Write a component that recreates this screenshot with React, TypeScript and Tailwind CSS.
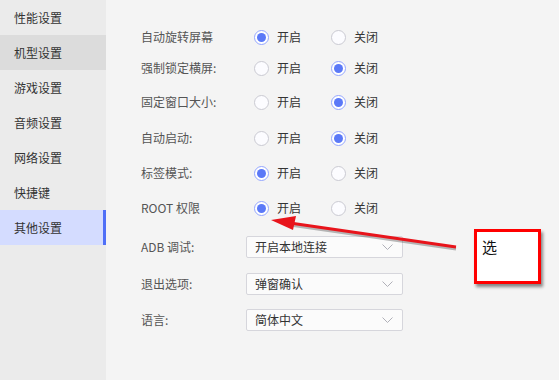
import React from "react";

const font = { fontFamily: '"Noto Sans CJK SC", "Noto Sans", sans-serif' };

const menu = ["性能设置", "机型设置", "游戏设置", "音频设置", "网络设置", "快捷键", "其他设置"];

const toggles = [
  { label: "自动旋转屏幕", on: true, mt: "mt-[27px]" },
  { label: "强制锁定横屏:", on: false, mt: "mt-[11px]" },
  { label: "固定窗口大小:", on: false, mt: "mt-[14px]" },
  { label: "自动启动:", on: false, mt: "mt-[16px]" },
  { label: "标签模式:", on: true, mt: "mt-[15px]" },
  { label: "ROOT 权限", on: true, mt: "mt-[15px]" },
];

const selects = [
  { label: "ADB 调试:", value: "开启本地连接", mt: "mt-[18px]" },
  { label: "退出选项:", value: "弹窗确认", mt: "mt-[15px]" },
  { label: "语言:", value: "简体中文", mt: "mt-[14px]" },
];

const Radio: React.FC<{ checked: boolean; text: string }> = ({ checked, text }) => (
  <div className="flex items-center w-[77px]">
    <span
      className={
        checked
          ? "flex items-center justify-center w-[15px] h-[15px] rounded-full border border-[#94a6ff] bg-white"
          : "flex items-center justify-center w-[15px] h-[15px] rounded-full border border-[#cacad2] bg-[#fcfcff]"
      }
    >
      {checked && <span className="w-[9px] h-[9px] rounded-full bg-[#5b79f7]" />}
    </span>
    <span className="ml-[8px] text-[12px] text-[#333]">{text}</span>
  </div>
);

export default function App() {
  return (
    <div className="relative flex w-full h-[380px] bg-[#f4f4f4] overflow-hidden" style={font}>
      {/* sidebar */}
      <aside className="w-[106px] h-full bg-[#ebebeb] flex flex-col">
        {menu.map((m, i) => (
          <div
            key={m}
            className={
              i === 6
                ? "h-[35px] flex items-center pl-[14px] text-[12px] text-[#333] bg-[#d4dcff] border-r-[3px] border-[#4f6ff7]"
                : i === 1
                ? "h-[35px] flex items-center pl-[14px] text-[12px] text-[#333] bg-[#dcdcdc]"
                : "h-[35px] flex items-center pl-[14px] text-[12px] text-[#333]"
            }
          >
            {m}
          </div>
        ))}
      </aside>

      {/* content */}
      <main className="flex-1 flex flex-col pl-[35px]">
        {toggles.map((t) => (
          <div key={t.label} className={`flex items-center h-[20px] ${t.mt}`}>
            <span className="w-[105px] text-[12px] text-[#555]">{t.label}</span>
            <div className="flex items-center ml-[8px]">
              <Radio checked={t.on} text="开启" />
              <Radio checked={!t.on} text="关闭" />
            </div>
          </div>
        ))}
        {selects.map((s) => (
          <div key={s.label} className={`flex items-center h-[22px] ${s.mt}`}>
            <span className="w-[105px] text-[12px] text-[#555]">{s.label}</span>
            <div className="flex items-center justify-between w-[157px] h-[22px] pl-[8px] pr-[9px] bg-[#fbfbfb] border border-[#d6d6dc] rounded-[2px]">
              <span className="text-[12px] text-[#333]">{s.value}</span>
              <svg width="11" height="6" viewBox="0 0 11 6">
                <path d="M0.5 0.5 L5.5 5.5 L10.5 0.5" fill="none" stroke="#b0b0b8" strokeWidth="1" />
              </svg>
            </div>
          </div>
        ))}
      </main>

      {/* annotation arrow */}
      <svg className="absolute left-0 top-0 pointer-events-none" width="559" height="380">
        <line x1="290" y1="225" x2="456" y2="249" stroke="rgba(60,60,60,0.35)" strokeWidth="3" />
        <line x1="290" y1="223" x2="456" y2="247" stroke="#e8141b" strokeWidth="3" />
        <polygon points="271,220 296,216 293,230" fill="#e8141b" />
      </svg>

      {/* annotation box */}
      <div className="absolute left-[474px] top-[229px] w-[67px] h-[55px] bg-white border-[3px] border-[#ff0000] shadow-[2px_3px_3px_rgba(0,0,0,0.45)] pl-[5px] pt-[2px]">
        <span className="text-[15px] text-[#111] font-normal">选</span>
      </div>
    </div>
  );
}
